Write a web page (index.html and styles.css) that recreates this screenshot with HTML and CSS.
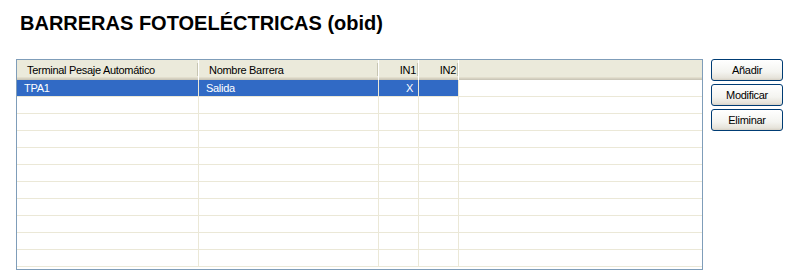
FILE: index.html
```html
<!DOCTYPE html>
<html lang="es">
<head>
  <meta charset="UTF-8">
  <title>Barreras fotoeléctricas (obid)</title>
  <link rel="stylesheet" href="styles.css">
</head>
<body>

<h1 class="title">BARRERAS FOTOELÉCTRICAS (obid)</h1>

<div class="main">
  <div class="list">
    <div class="row head">
      <div class="cell">Terminal Pesaje Automático</div>
      <div class="cell">Nombre Barrera</div>
      <div class="cell num">IN1</div>
      <div class="cell num">IN2</div>
      <div class="cell last"></div>
    </div>
    <div class="row selected">
      <div class="cell">TPA1</div>
      <div class="cell">Salida</div>
      <div class="cell num">X</div>
      <div class="cell num"></div>
      <div class="cell last"></div>
    </div>
    <div class="row"><div class="cell"></div><div class="cell"></div><div class="cell"></div><div class="cell"></div><div class="cell last"></div></div>
    <div class="row"><div class="cell"></div><div class="cell"></div><div class="cell"></div><div class="cell"></div><div class="cell last"></div></div>
    <div class="row"><div class="cell"></div><div class="cell"></div><div class="cell"></div><div class="cell"></div><div class="cell last"></div></div>
    <div class="row"><div class="cell"></div><div class="cell"></div><div class="cell"></div><div class="cell"></div><div class="cell last"></div></div>
    <div class="row"><div class="cell"></div><div class="cell"></div><div class="cell"></div><div class="cell"></div><div class="cell last"></div></div>
    <div class="row"><div class="cell"></div><div class="cell"></div><div class="cell"></div><div class="cell"></div><div class="cell last"></div></div>
    <div class="row"><div class="cell"></div><div class="cell"></div><div class="cell"></div><div class="cell"></div><div class="cell last"></div></div>
    <div class="row"><div class="cell"></div><div class="cell"></div><div class="cell"></div><div class="cell"></div><div class="cell last"></div></div>
    <div class="row"><div class="cell"></div><div class="cell"></div><div class="cell"></div><div class="cell"></div><div class="cell last"></div></div>
    <div class="row"><div class="cell"></div><div class="cell"></div><div class="cell"></div><div class="cell"></div><div class="cell last"></div></div>
  </div>

  <div class="actions">
    <button class="btn" type="button">Añadir</button>
    <button class="btn" type="button">Modificar</button>
    <button class="btn" type="button">Eliminar</button>
  </div>
</div>

</body>
</html>
```

FILE: styles.css
```css
body {
  margin: 0;
  font-family: "Liberation Sans", Arial, sans-serif;
  background-color: #fff;
  color: #000;
}

.title {
  margin: 12px 0 0 0;
  padding-left: 20px;
  font-size: 20px;
  line-height: 23px;
  font-weight: bold;
}

.main {
  display: flex;
  align-items: flex-start;
  margin-top: 24px;
  padding-left: 16px;
}

/* list view */

.list {
  width: 687px;
  height: 211px;
  box-sizing: border-box;
  border: 1px solid #7f9db9;
  overflow: hidden;
  background-color: #fff;
  font-size: 11px;
  letter-spacing: -0.3px;
}

.row {
  display: grid;
  grid-template-columns: 182px 180px 40px 40px 1fr;
  height: 17px;
  box-sizing: border-box;
  border-bottom: 1px solid #ebe8d7;
  flex-shrink: 0;
}

.cell {
  box-sizing: border-box;
  border-right: 1px solid #ebe8d7;
  padding: 0 5px 0 7px;
  line-height: 16px;
  white-space: nowrap;
  overflow: hidden;
}

.cell.last {
  border-right: 0;
}

.num {
  text-align: right;
}

.head {
  height: 20px;
  border-bottom: 0;
  background-color: #ebeadb;
  box-shadow: inset 0 -1px #cbc7b8, inset 0 -2px #d6d2c2, inset 0 -3px #e2decd;
}

.head .cell {
  position: relative;
  border-right: 1px solid #fff;
  padding: 2px 2px 0 10px;
  line-height: 17px;
}

.head .cell::after {
  content: "";
  position: absolute;
  right: 0;
  top: 3px;
  bottom: 4px;
  width: 1px;
  background-color: #c7c5b2;
}

.head .cell.last {
  border-right: 0;
}

.head .cell.last::after {
  display: none;
}

.selected .cell {
  background-color: #316ac5;
  color: #fff;
}

.selected .cell.last {
  background-color: #fff;
}

/* buttons */

.actions {
  display: flex;
  flex-direction: column;
  gap: 3px;
  margin-left: 8px;
}

.btn {
  width: 72px;
  height: 22px;
  padding: 0;
  border: 1px solid #003c74;
  border-radius: 3px;
  background: linear-gradient(#ffffff, #f4f4f0 60%, #e6e3da 90%, #d6d0c5);
  font-family: "Liberation Sans", Arial, sans-serif;
  font-size: 11px;
  letter-spacing: -0.3px;
  color: #000;
}
```
